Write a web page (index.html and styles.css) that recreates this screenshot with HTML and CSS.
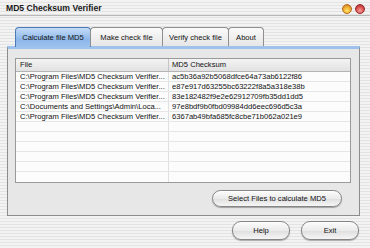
FILE: index.html
```html
<!DOCTYPE html>
<html>
<head>
<meta charset="utf-8">
<link rel="stylesheet" href="styles.css">
</head>
<body>
<div class="window">
  <div class="titlebar">
    <span class="title">MD5 Checksum Verifier</span>
    <span class="lights"><span class="light orange"></span><span class="light red"></span></span>
  </div>
  <div class="tabs">
    <div class="tab tab-calc active">Calculate file MD5</div>
    <div class="tab tab-make">Make check file</div>
    <div class="tab tab-verify">Verify check file</div>
    <div class="tab tab-about">About</div>
  </div>
  <div class="panel">
    <div class="list">
      <div class="row head"><div class="c1">File</div><div class="c2">MD5 Checksum</div></div>
      <div class="row"><div class="c1">C:\Program Files\MD5 Checksum Verifier...</div><div class="c2">ac5b36a92b5068dfce64a73ab6122f86</div></div>
      <div class="row"><div class="c1">C:\Program Files\MD5 Checksum Verifier...</div><div class="c2">e87e917d63255bc63222f8a5a318e38b</div></div>
      <div class="row"><div class="c1">C:\Program Files\MD5 Checksum Verifier...</div><div class="c2">83e182482f9e2e62912709fb35dd1dd5</div></div>
      <div class="row"><div class="c1">C:\Documents and Settings\Admin\Loca...</div><div class="c2">97e8bdf9b0fbd09984dd6eec696d5c3a</div></div>
      <div class="row"><div class="c1">C:\Program Files\MD5 Checksum Verifier...</div><div class="c2">6367ab49bfa685fc8cbe71b062a021e9</div></div>
      <div class="row"><div class="c1"></div><div class="c2"></div></div>
      <div class="row"><div class="c1"></div><div class="c2"></div></div>
      <div class="row"><div class="c1"></div><div class="c2"></div></div>
      <div class="row"><div class="c1"></div><div class="c2"></div></div>
      <div class="row"><div class="c1"></div><div class="c2"></div></div>
      <div class="row last"><div class="c1"></div><div class="c2"></div></div>
    </div>
    <div class="panel-actions">
      <button class="btn btn-wide">Select Files to calculate MD5</button>
    </div>
  </div>
  <div class="footer">
    <button class="btn btn-small">Help</button>
    <button class="btn btn-small">Exit</button>
  </div>
</div>
</body>
</html>
```
FILE: styles.css
```css
html, body {
  margin: 0;
  padding: 0;
}
body {
  width: 370px;
  height: 248px;
  overflow: hidden;
  font-family: "Liberation Sans", Arial, sans-serif;
  font-size: 7.6px;
  color: #111;
}
.window {
  width: 370px;
  height: 248px;
  box-sizing: border-box;
  background: repeating-linear-gradient(to bottom, #f3f3f3 0 2px, #e3e3e3 2px 3px);
}
.titlebar {
  height: 15px;
  border-bottom: 1px solid #b8b8b8;
  display: flex;
  align-items: center;
  justify-content: space-between;
  padding: 0 5px 0 6px;
}
.title {
  font-weight: bold;
  font-size: 8.6px;
  color: #1a1a1a;
}
.lights {
  display: flex;
  gap: 3px;
  margin-top: 2px;
}
.light {
  width: 10px;
  height: 10px;
  border-radius: 50%;
  box-sizing: border-box;
}
.orange {
  background: radial-gradient(circle at 50% 70%, #ffe46a 0, #f3b53a 45%, #c8701a 100%);
  border: 1px solid #b36a1c;
}
.red {
  background: radial-gradient(circle at 50% 70%, #f7a0a0 0, #e05a5a 45%, #a52424 100%);
  border: 1px solid #962a2a;
}
.tabs {
  display: flex;
  margin-top: 11px;
  padding-left: 15px;
  height: 19px;
  position: relative;
  z-index: 1;
}
.tab {
  box-sizing: border-box;
  height: 19px;
  display: flex;
  align-items: center;
  justify-content: center;
  border: 1px solid #8f8f8f;
  border-bottom: none;
  border-radius: 4px 4px 0 0;
  background: linear-gradient(#fafafa, #e6e6e6);
  color: #111;
  margin-right: -1px;
}
.tab-calc { width: 76px; }
.tab-make { width: 73px; }
.tab-verify { width: 67px; }
.tab-about { width: 36px; }
.tab.active {
  border-color: #4f7ab8;
  background: linear-gradient(#c4dcf7, #8db7ea 60%, #9cc2ee);
  height: 20px;
}
.panel {
  margin: 0 10px 0 7px;
  height: 170px;
  box-sizing: border-box;
  background: #e7e7e7;
  border: 1px solid #8c8c8c;
  border-top: 3px solid #9ec2ec;
  display: flex;
  flex-direction: column;
}
.list {
  margin: 9px 8px 0 7px;
  border: 1px solid #9a9a9a;
  background: #fcfcfc;
}
.row {
  display: flex;
  height: 10px;
  line-height: 10px;
  box-sizing: border-box;
  border-bottom: 1px solid #e6e6e6;
}
.row.last {
  border-bottom: none;
}
.row.head {
  height: 13px;
  line-height: 12px;
  background: linear-gradient(#f4f4f4, #e2e2e2);
  border-bottom: 1px solid #b4b4b4;
}
.c1 {
  width: 153px;
  box-sizing: border-box;
  padding-left: 4px;
  border-right: 1px solid #e0e0e0;
  white-space: nowrap;
  overflow: hidden;
}
.c2 {
  flex: 1;
  padding-left: 3px;
  white-space: nowrap;
  overflow: hidden;
}
.head .c1 {
  border-right: 1px solid #c4c4c4;
}
.panel-actions {
  display: flex;
  justify-content: flex-end;
  margin-top: 7px;
  padding-right: 17px;
}
.btn {
  font-family: inherit;
  font-size: 7.6px;
  color: #111;
  padding: 0;
  box-sizing: border-box;
  border: 1px solid #858585;
  border-radius: 9px;
  background: linear-gradient(#fcfcfc, #ebebeb 50%, #e0e0e0 55%, #f6f6f6);
  box-shadow: inset 0 1px 0 #fff, 0 1px 1px rgba(0, 0, 0, 0.3);
}
.btn-wide {
  width: 130px;
  height: 17px;
}
.footer {
  display: flex;
  justify-content: flex-end;
  gap: 11px;
  padding-right: 11px;
  margin-top: 5px;
}
.btn-small {
  width: 58px;
  height: 19px;
}
```
